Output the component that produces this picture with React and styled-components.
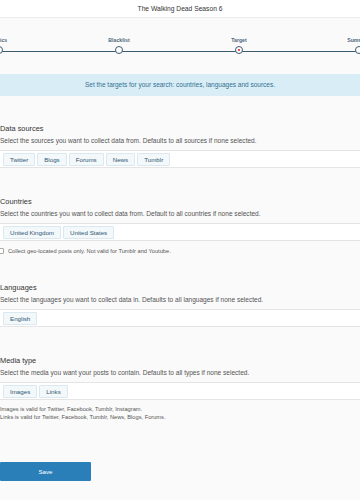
import React from "react";
import styled, { createGlobalStyle } from "styled-components";

const Global = createGlobalStyle`
  html, body {
    margin: 0;
    padding: 0;
    background: #fafafa;
    font-family: "Liberation Sans", Arial, sans-serif;
    overflow: hidden;
  }
`;

const Page = styled.div`
  width: 360px;
  height: 500px;
  background: #fafafa;
  overflow: hidden;
`;

const Header = styled.div`
  height: 17px;
  line-height: 17px;
  background: #fff;
  border-bottom: 1px solid #ececec;
  text-align: center;
  font-size: 6.7px;
  color: #333;
`;

const Stepper = styled.div`
  position: relative;
  display: grid;
  grid-template-columns: repeat(4, 120px);
  margin-left: -61px;
  width: 480px;
  height: 56px;
`;

const Track = styled.div`
  position: absolute;
  left: 0;
  right: 0;
  top: 32.5px;
  height: 1px;
  background: #3f5b70;
`;

const Step = styled.div`
  position: relative;
  display: flex;
  flex-direction: column;
  align-items: center;
  padding-top: 19px;
`;

const StepLabel = styled.div`
  font-size: 5.2px;
  font-weight: bold;
  color: #4d667a;
  height: 9px;
  line-height: 6px;
`;

const Dot = styled.div`
  position: relative;
  width: 6px;
  height: 6px;
  border: 1.3px solid #3f5b70;
  border-radius: 50%;
  background: #fff;
  display: flex;
  align-items: center;
  justify-content: center;
  &::after {
    content: "";
    display: ${(p) => (p.active ? "block" : "none")};
    width: 1.6px;
    height: 1.6px;
    border-radius: 50%;
    background: #e0312b;
  }
`;

const Banner = styled.div`
  height: 22px;
  line-height: 22px;
  background: #d9edf7;
  color: #31708f;
  text-align: center;
  font-size: 6.5px;
`;

const Section = styled.div`
  margin-top: ${(p) => p.top}px;
`;

const Heading = styled.div`
  height: 10px;
  line-height: 10px;
  font-size: 7.4px;
  color: #333;
`;

const Desc = styled.div`
  margin-top: 3px;
  height: 8px;
  line-height: 8px;
  font-size: 6.55px;
  color: #555;
`;

const ChipRow = styled.div`
  box-sizing: border-box;
  margin-top: 5px;
  height: 18px;
  background: #fff;
  border-top: 1px solid #e4e4e4;
  border-bottom: 1px solid #e4e4e4;
  display: flex;
  align-items: center;
  gap: 2px;
  padding-left: 3px;
`;

const Chip = styled.div`
  box-sizing: border-box;
  height: 13px;
  line-height: 11px;
  padding: 0 ${(p) => p.pad || 6}px;
  background: #f3f8fb;
  border: 1px solid #dbe8f0;
  border-radius: 1px;
  font-size: 6.2px;
  color: #2f5670;
`;

const CheckLine = styled.label`
  display: flex;
  align-items: center;
  gap: 4px;
  height: 10px;
  margin-top: 5px;
  font-size: 5.7px;
  color: #555;
`;

const Box = styled.span`
  box-sizing: border-box;
  width: 6px;
  height: 6px;
  margin-left: -2px;
  border: 0.7px solid #aaa;
  border-radius: 1px;
  background: #fff;
`;

const Notes = styled.div`
  margin-top: 5px;
  font-size: 5.7px;
  line-height: 8px;
  color: #555;
`;

const SaveButton = styled.button`
  display: block;
  margin-top: 41px;
  width: 91px;
  height: 19px;
  border: none;
  border-radius: 1px;
  background: #2a7fb9;
  color: #fff;
  font-family: inherit;
  font-size: 6.2px;
  padding: 0;
`;

const steps = [
  { label: "Topics" },
  { label: "Blacklist" },
  { label: "Target", active: true },
  { label: "Summary" },
];

const App = () => {
  return (
    <Page>
      <Global />
      <Header>The Walking Dead Season 6</Header>
      <Stepper>
        <Track />
        {steps.map((s) => (
          <Step key={s.label}>
            <StepLabel>{s.label}</StepLabel>
            <Dot active={s.active} />
          </Step>
        ))}
      </Stepper>
      <Banner>Set the targets for your search: countries, languages and sources.</Banner>

      <Section top={28}>
        <Heading>Data sources</Heading>
        <Desc>Select the sources you want to collect data from. Defaults to all sources if none selected.</Desc>
        <ChipRow>
          <Chip>Twitter</Chip>
          <Chip>Blogs</Chip>
          <Chip>Forums</Chip>
          <Chip>News</Chip>
          <Chip>Tumblr</Chip>
        </ChipRow>
      </Section>

      <Section top={29}>
        <Heading>Countries</Heading>
        <Desc>Select the countries you want to collect data from. Default to all countries if none selected.</Desc>
        <ChipRow>
          <Chip>United Kingdom</Chip>
          <Chip>United States</Chip>
        </ChipRow>
        <CheckLine>
          <Box />
          Collect geo-located posts only. Not valid for Tumblr and Youtube.
        </CheckLine>
      </Section>

      <Section top={27}>
        <Heading>Languages</Heading>
        <Desc>Select the languages you want to collect data in. Defaults to all languages if none selected.</Desc>
        <ChipRow>
          <Chip>English</Chip>
        </ChipRow>
      </Section>

      <Section top={29}>
        <Heading>Media type</Heading>
        <Desc>Select the media you want your posts to contain. Defaults to all types if none selected.</Desc>
        <ChipRow>
          <Chip>Images</Chip>
          <Chip>Links</Chip>
        </ChipRow>
        <Notes>
          Images is valid for Twitter, Facebook, Tumblr, Instagram.
          <br />
          Links is valid for Twitter, Facebook, Tumblr, News, Blogs, Forums.
        </Notes>
      </Section>

      <SaveButton>Save</SaveButton>
    </Page>
  );
};

export default App;
